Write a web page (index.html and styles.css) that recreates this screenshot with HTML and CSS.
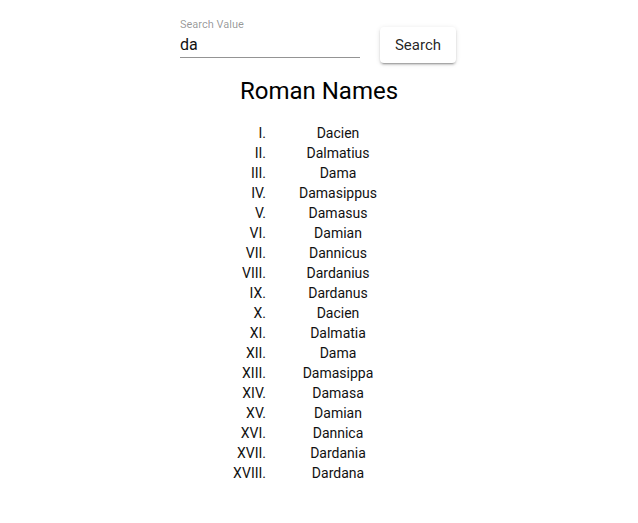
FILE: index.html
```html
<!DOCTYPE html>
<html>
<head>
<meta charset="utf-8">
<link rel="stylesheet" href="styles.css">
</head>
<body>
<div class="app">
  <form class="search">
    <label class="field">
      <span class="field-label">Search Value</span>
      <input class="field-input" type="text" value="da">
    </label>
    <button type="button" class="btn">Search</button>
  </form>
  <h1 class="title">Roman Names</h1>
  <div class="names">
    <span class="num">I.</span><span class="name">Dacien</span>
    <span class="num">II.</span><span class="name">Dalmatius</span>
    <span class="num">III.</span><span class="name">Dama</span>
    <span class="num">IV.</span><span class="name">Damasippus</span>
    <span class="num">V.</span><span class="name">Damasus</span>
    <span class="num">VI.</span><span class="name">Damian</span>
    <span class="num">VII.</span><span class="name">Dannicus</span>
    <span class="num">VIII.</span><span class="name">Dardanius</span>
    <span class="num">IX.</span><span class="name">Dardanus</span>
    <span class="num">X.</span><span class="name">Dacien</span>
    <span class="num">XI.</span><span class="name">Dalmatia</span>
    <span class="num">XII.</span><span class="name">Dama</span>
    <span class="num">XIII.</span><span class="name">Damasippa</span>
    <span class="num">XIV.</span><span class="name">Damasa</span>
    <span class="num">XV.</span><span class="name">Damian</span>
    <span class="num">XVI.</span><span class="name">Dannica</span>
    <span class="num">XVII.</span><span class="name">Dardania</span>
    <span class="num">XVIII.</span><span class="name">Dardana</span>
  </div>
</div>
</body>
</html>
```

FILE: styles.css
```css
html, body {
  margin: 0;
  padding: 0;
  background: #fff;
}
body {
  font-family: Roboto, "Liberation Sans", sans-serif;
  color: rgba(0, 0, 0, 0.87);
}
.app {
  display: flex;
  flex-direction: column;
  align-items: center;
  padding-top: 17px;
}
.search {
  display: flex;
  align-items: flex-start;
  gap: 20px;
  margin: 0 2px 0 0;
}
.field {
  display: flex;
  flex-direction: column;
  width: 180px;
  border-bottom: 1px solid rgba(0, 0, 0, 0.42);
}
.field-label {
  padding-top: 1px;
  font-size: 11px;
  line-height: 14px;
  color: rgba(0, 0, 0, 0.42);
}
.field-input {
  border: 0;
  outline: none;
  padding: 3px 0 3px;
  margin: 0;
  font-family: inherit;
  font-size: 16px;
  line-height: 19px;
  color: #111;
  background: transparent;
}
.btn {
  margin-top: 10px;
  width: 76px;
  height: 36px;
  border: 0;
  border-radius: 4px;
  background: #fff;
  font-family: inherit;
  font-size: 15px;
  color: rgba(0, 0, 0, 0.87);
  box-shadow: 0 3px 1px -2px rgba(0,0,0,0.2), 0 2px 2px 0 rgba(0,0,0,0.14), 0 1px 5px 0 rgba(0,0,0,0.12);
  cursor: pointer;
}
.title {
  margin: 12px 0 16px;
  font-size: 24px;
  font-weight: 400;
  line-height: 32px;
  color: #000;
}
.names {
  display: grid;
  grid-template-columns: 36px 140px;
  column-gap: 2px;
  font-size: 14px;
  line-height: 20px;
  color: #111;
}
.num {
  text-align: right;
}
.name {
  text-align: center;
}
```
